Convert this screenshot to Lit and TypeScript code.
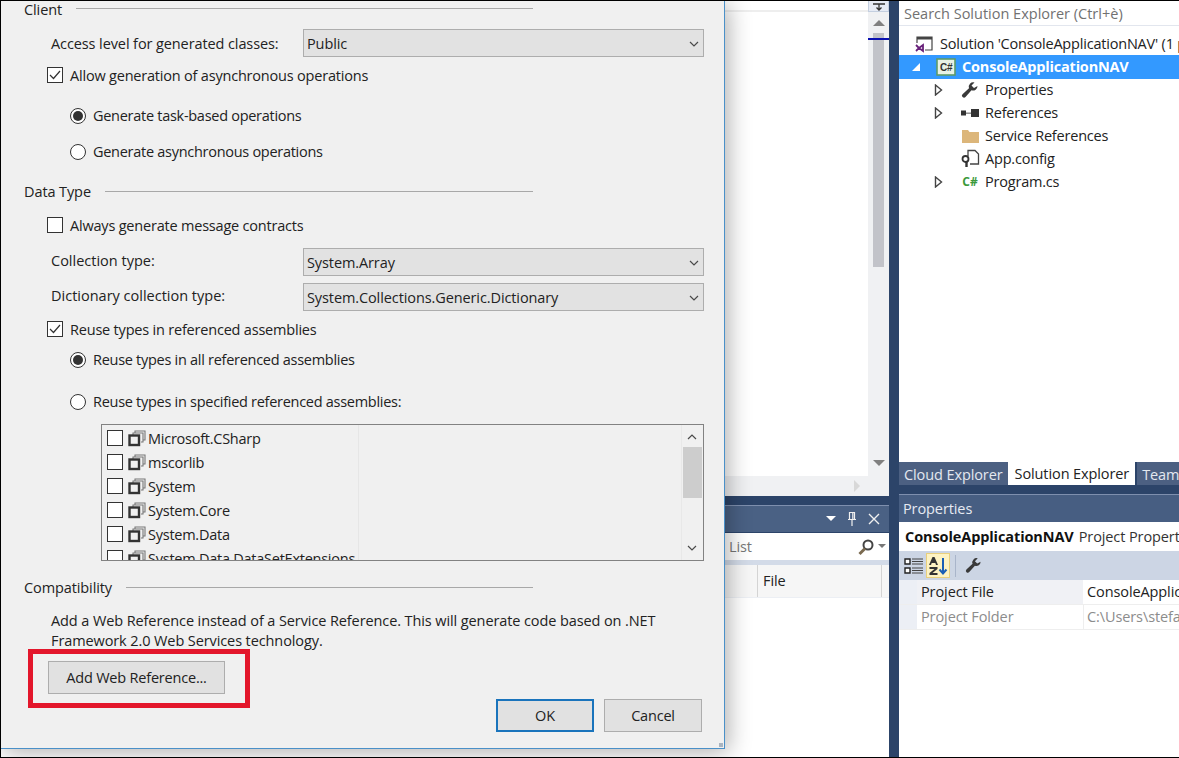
import { LitElement, html, css } from "lit";
import { customElement } from "lit/decorators.js";

const chev = (up = false) => html`<svg class="chev" width="12" height="8" viewBox="0 0 12 8"><path d=${up ? "M2 6 6 2l4 4" : "M2 2l4 4 4-4"} fill="none" stroke="#4a4a4a" stroke-width="1.2"/></svg>`;
const asm = html`<svg class="asm" width="18" height="17" viewBox="0 0 18 17"><path d="M7 3V1h10v9h-2M5 5V3h10v9h-2" fill="none" stroke="#777" stroke-width="1.1"/><rect x="1.500" y="5.500" width="9.500" height="9.500" fill="#f0f0f0" stroke="#333" stroke-width="2.400"/></svg>`;
const tri = html`<svg class="tri" width="9" height="12" viewBox="0 0 9 12"><path d="M1.500 1 7.500 6l-6 5z" fill="#fff" stroke="#444" stroke-width="1.4"/></svg>`;
const tick = html`<svg width="12" height="10" viewBox="0 0 12 10"><path d="M1 5l3.500 3.500L11 1" fill="none" stroke="#333" stroke-width="1.2"/></svg>`;
const wrench = (s: number) => html`<svg width=${s} height=${s} viewBox="0 0 18 17"><path d="M16.500 4.500a4.500 4.500 0 0 1-6 4.300L4.500 15.500a2 2 0 0 1-3-2.800l6.500-6a4.500 4.500 0 0 1 5.500-5.800L10.500 4l2.500 2.500z" fill="#3a3a3a"/></svg>`;

@customElement("app-root")
export class AppRoot extends LitElement {
  static styles = css`
    :host { display: block; width: 1179px; height: 758px; box-sizing: border-box; border: solid #000; border-width: 1px 0 1px 1px; overflow: hidden; font: 14.5px/20px "Open Sans", "Noto Sans", sans-serif; color: #222; letter-spacing: -0.1px; }
    svg { flex: none; }
    .ide { position: relative; height: 756px; display: grid; grid-template-columns: 888px 10px 280px; background: #2c4469; }
    .mid { display: flex; flex-direction: column; min-width: 0; }
    .editor { height: 495px; flex: none; background: #fff; display: flex; justify-content: flex-end; position: relative; }
    .hscroll { position: absolute; left: 724px; right: 21px; bottom: 0; height: 20px; background: #f0f1f3; display: flex; justify-content: flex-end; align-items: center; padding-right: 8px; }
    .hscroll i { width: 0; height: 0; border-left: 6px solid #d8d8d8; border-top: 6px solid transparent; border-bottom: 6px solid transparent; }
    .toprule { position: absolute; left: 724px; right: 21px; top: 9px; height: 2px; background: #eeeeee; }
    .vscroll { width: 21px; background: #f0f1f3; display: flex; flex-direction: column; align-items: center; position: relative; }
    .split { width: 100%; height: 11px; box-sizing: border-box; background: #e6ebf5; border: 1px solid #c4cfe0; border-top: 0; display: flex; justify-content: center; }
    .up { margin-top: 8px; width: 0; height: 0; border: 6px solid transparent; border-top: 0; border-bottom: 6px solid #808080; }
    .thumb { margin-top: 7px; width: 11px; height: 234px; background: #c2c3c9; }
    .down { margin-top: 193px; width: 0; height: 0; border: 6px solid transparent; border-bottom: 0; border-top: 6px solid #808080; }
    .blue { position: absolute; left: 0; right: 0; top: 37px; height: 2px; background: #0a10b0; }
    .midgap { height: 9px; flex: none; }
    .ptitle { height: 27px; flex: none; background: #4a6184; border-top: 1px solid #7e8fae; box-sizing: border-box; display: flex; justify-content: flex-end; align-items: center; gap: 10px; padding-right: 9px; }
    .psearch { height: 27px; flex: none; margin-top: 1px; background: #fff; display: flex; align-items: center; padding-left: 728px; color: #777; }
    .psearch .grow { flex: 1; }
    .psearch svg { margin-right: 3px; }
    .pgap { height: 5px; flex: none; background: #d3dbe8; }
    .phead { height: 32px; flex: none; background: #f6f6f6; display: flex; align-items: stretch; padding-left: 756px; border-bottom: 1px solid #eceff4; }
    .phead span { width: 125px; box-sizing: border-box; border: solid #d4d4d4; border-width: 0 1px; padding: 6px 0 0 5px; }
    .pbody { flex: 1; background: #fff; }

    .right { display: flex; flex-direction: column; min-width: 0; background: #fff; overflow: hidden; }
    .search { height: 25px; flex: none; color: #717171; padding: 1px 0 0 5px; box-sizing: border-box; border-bottom: 1px solid #e2e6ee; white-space: nowrap; line-height: 24px; letter-spacing: 0; }
    .tree { height: 436px; flex: none; padding-top: 6px; box-sizing: border-box; overflow: hidden; letter-spacing: -0.2px; }
    .node { height: 23px; display: flex; align-items: center; white-space: nowrap; position: relative; }
    .node.sel { height: 24px; background: #3399ff; color: #fff; font-weight: 700; margin-bottom: -1px; }
    .a { width: 60px; flex: none; padding-left: 35px; box-sizing: border-box; display: flex; }
    .ico { width: 22px; flex: none; display: flex; justify-content: center; align-items: center; margin-right: 4px; }
    .sol { padding-left: 15px; gap: 6px; }
    .prj { padding-left: 13px; }
    .prj .glyph { width: 0; height: 0; border-left: 8px solid transparent; border-bottom: 8px solid #fff; margin-right: 16px; }
    .prj svg { margin-right: 6px; }
    .cs { color: #3c9a3c; font-weight: 700; font-size: 12px; letter-spacing: 0; }
    .tabs { height: 23px; flex: none; background: #2c4469; display: flex; gap: 2px; }
    .tab { background: #4c6082; color: #e4e8f0; padding: 0 5px; line-height: 25px; white-space: nowrap; }
    .tab.cur { background: #fff; color: #222; margin-left: -2px; padding: 0 6px 0 7px; line-height: 23px; }
    .tabgap { height: 9px; flex: none; background: #2c4469; }
    .ph { height: 28px; flex: none; background: #475e82; border-top: 1px solid #7e8fae; box-sizing: border-box; color: #e6eaf2; padding-left: 4px; line-height: 27px; }
    .subj { height: 29px; flex: none; padding-left: 6px; line-height: 29px; white-space: nowrap; color: #333; }
    .subj b { color: #111; margin-right: 5px; }
    .tb { height: 29px; flex: none; background: #ccd5e4; display: flex; align-items: center; padding-left: 5px; gap: 2px; }
    .tbact { width: 24px; height: 25px; box-sizing: border-box; background: #fdf2c2; border: 1px solid #e8cf7c; display: flex; align-items: center; justify-content: center; }
    .tbsep { width: 1px; height: 22px; background: #a9b5ca; margin: 0 7px 0 3px; }
    .prow { height: 24px; display: grid; grid-template-columns: 18px 166px 1fr; border-bottom: 1px solid #eeeeee; white-space: nowrap; line-height: 24px; overflow: hidden; }
    .prow > :nth-child(1) { background: #eceff5; }
    .prow > :nth-child(2) { background: #f0f1f5; padding-left: 4px; }
    .prow > :nth-child(3) { padding-left: 4px; }
    .prow.dim { color: #8c8c8c; }
    .prow.dim > :nth-child(2) { background: #fff; }
    .prow.dim > :nth-child(3) { border-left: 1px solid #eeeeee; padding-left: 3px; }

    .dialog { position: absolute; left: 0; top: 0; width: 724px; height: 748px; box-sizing: border-box; background: #f0f0f0; border: solid #4a90c8; border-width: 0 1px 1px 0; box-shadow: 3px 3px 22px rgba(0,0,0,.32); display: flex; flex-direction: column; white-space: nowrap; }
    .group { height: 20px; box-sizing: border-box; padding-top: 2px; flex: none; display: flex; align-items: center; margin-left: 23px; width: 509px; gap: 14px; }
    .group::after { content: ""; flex: 1; height: 1px; background: #a8a8a8; margin-bottom: 2px; }
    .first { height: 15px; }
    .field { height: 28px; flex: none; display: flex; align-items: center; margin-left: 50px; }
    .field label { width: 252px; flex: none; }
    .field label.hi { margin-top: -3px; letter-spacing: 0; }
    .field label.mid-l { margin-top: 1px; }
    .combo { width: 401px; height: 28px; box-sizing: border-box; background: #e2e2e2; border: 1px solid #adadad; display: flex; align-items: center; justify-content: space-between; padding: 1px 3px 0 3px; }
    .check, .radio { height: 20px; flex: none; display: flex; align-items: center; gap: 7px; }
    .check { margin-left: 46px; letter-spacing: -0.2px; }
    .check span:last-child { padding-top: 2px; }
    .radio { margin-left: 69px; letter-spacing: -0.28px; }
    .box { width: 16px; height: 16px; box-sizing: border-box; border: 1px solid #333; background: #fff; display: flex; align-items: center; justify-content: center; flex: none; }
    .dot { width: 16px; height: 16px; box-sizing: border-box; border: 1px solid #333; border-radius: 50%; background: #fff; display: flex; align-items: center; justify-content: center; flex: none; }
    .dot.on::after { content: ""; width: 10px; height: 10px; border-radius: 50%; background: #333; }
    .list { height: 137px; flex: none; width: 603px; box-sizing: border-box; margin-left: 100px; border: 1px solid #828282; display: flex; overflow: hidden; }
    .items { width: 257px; flex: none; border-right: 1px solid #e6e6e6; padding: 1px 0 0 5px; box-sizing: border-box; overflow: hidden; letter-spacing: -0.25px; }
    .item { height: 24px; display: flex; align-items: center; gap: 5px; }
    .item span:last-child { margin-left: -3px; padding-top: 2px; }
    .lfill { flex: 1; }
    .lscroll { width: 22px; flex: none; background: #f0f0f0; border-left: 1px solid #e8e8e8; box-sizing: border-box; display: flex; flex-direction: column; align-items: center; padding: 8px 1px 0 0; }
    .lthumb { width: 19px; height: 51px; background: #cdcdcd; margin-top: 6px; }
    .lscroll .chev:last-child { margin-top: 46px; }
    .desc { height: 40px; flex: none; margin-left: 50px; padding-top: 1px; }
    .btn { height: 33px; box-sizing: border-box; background: #e1e1e1; border: 1px solid #adadad; display: flex; align-items: center; justify-content: center; flex: none; letter-spacing: -0.2px; }
    .add { width: 177px; margin-left: 47px; }
    .foot { display: flex; justify-content: flex-end; gap: 10px; padding-right: 22px; }
    .ok, .cancel { width: 98px; }
    .ok { border: 2px solid #1a74bc; }
    .m5 { margin-top: 5px; } .m7 { margin-top: 7px; } .m8 { margin-top: 8px; } .m10 { margin-top: 10px; } .m11 { margin-top: 11px; } .m12 { margin-top: 12px; } .m13 { margin-top: 13px; } .m14 { margin-top: 14px; } .m16 { margin-top: 16px; } .m19 { margin-top: 19px; } .m21 { margin-top: 21px; } .m22 { margin-top: 22px; }
    .red { position: absolute; left: 27px; top: 648px; width: 222px; height: 59px; box-sizing: border-box; border: 5px solid #e3162b; }
    .grip { position: absolute; right: 1px; bottom: 1px; width: 4px; height: 4px; background: #a9b4c0; }
  `;

  private item(t: string) {
    return html`<div class="item"><span class="box"></span>${asm}<span>${t}</span></div>`;
  }

  render() {
    return html`<div class="ide">
      <div class="mid">
        <div class="editor">
          <div class="toprule"></div>
          <div class="hscroll"><i></i></div>
          <div class="vscroll">
            <div class="split"><svg width="12" height="10" viewBox="0 0 12 10"><path d="M0 3h12M6 3v6M3.500 6.500 6 9l2.500-2.500" stroke="#333" stroke-width="1.3" fill="none"/></svg></div>
            <div class="up"></div><div class="thumb"></div><div class="down"></div>
            <div class="blue"></div>
          </div>
        </div>
        <div class="midgap"></div>
        <div class="ptitle">
          <svg width="10" height="6" viewBox="0 0 10 6"><path d="M0 0h10L5 5z" fill="#fff"/></svg>
          <svg width="12" height="16" viewBox="0 0 12 16"><path d="M3.500 1.500h5v7h-5zM2 8.500h8M6 8.500V15M6.800 2v6" fill="none" stroke="#f0f0f0" stroke-width="1.2"/></svg>
          <svg width="12" height="12" viewBox="0 0 12 12"><path d="M1 1l10 10M11 1 1 11" stroke="#f0f0f0" stroke-width="1.4"/></svg>
        </div>
        <div class="psearch"><span>List</span><span class="grow"></span>
          <svg width="18" height="18" viewBox="0 0 18 18"><circle cx="11" cy="7" r="4.500" fill="none" stroke="#444" stroke-width="2"/><path d="M8 10.500 2.500 16" stroke="#7a6a50" stroke-width="3"/></svg>
          <svg width="8" height="5" viewBox="0 0 8 5"><path d="M0 0h8L4 4z" fill="#777"/></svg>
        </div>
        <div class="pgap"></div>
        <div class="phead"><span>File</span></div>
        <div class="pbody"></div>
      </div>
      <div></div>
      <div class="right">
        <div class="search">Search Solution Explorer (Ctrl+è)</div>
        <div class="tree">
          <div class="node sol">
            <svg width="20" height="18" viewBox="0 0 20 18"><path d="M3 8V2h15v13h-7" fill="none" stroke="#444" stroke-width="1.2"/><path d="M3 2h15v2.500H3z" fill="#444"/><path d="M2 10l3 3-3 3M9 10 5 13l4 3z" fill="none" stroke="#68217a" stroke-width="1.8"/></svg>
            <span>Solution 'ConsoleApplicationNAV' (1 project)</span>
          </div>
          <div class="node sel prj">
            <span class="glyph"></span>
            <svg width="20" height="18" viewBox="0 0 20 18"><rect x="1" y="1" width="18" height="16" fill="#e8f2e6" stroke="#5d9a6a" stroke-width="1.6"/><text x="4" y="13" font-size="10" font-weight="700" fill="#333" font-family="Liberation Sans">C#</text></svg>
            <span>ConsoleApplicationNAV</span>
          </div>
          <div class="node"><span class="a">${tri}</span><span class="ico">${wrench(18)}</span><span>Properties</span></div>
          <div class="node"><span class="a">${tri}</span><span class="ico"><svg width="18" height="10" viewBox="0 0 18 10"><rect x="0" y="2.500" width="5" height="5" fill="#333"/><rect x="5" y="4.500" width="5" height="1.400" fill="#888"/><rect x="10" y="1" width="8" height="8" fill="#333"/></svg></span><span>References</span></div>
          <div class="node"><span class="a"></span><span class="ico"><svg width="17" height="15" viewBox="0 0 17 15"><path d="M0 2h6l1.500 2H17v11H0z" fill="#dcb67a"/></svg></span><span>Service References</span></div>
          <div class="node"><span class="a"></span><span class="ico"><svg width="19" height="19" viewBox="0 0 19 19"><path d="M7 7V1.500h7l3.500 3.500v10H9" fill="none" stroke="#444" stroke-width="1.3"/><circle cx="4.500" cy="10" r="3" fill="none" stroke="#333" stroke-width="1.800"/><path d="M5.500 12.500V18" stroke="#333" stroke-width="2.400"/></svg></span><span>App.config</span></div>
          <div class="node"><span class="a">${tri}</span><span class="ico"><span class="cs">C#</span></span><span>Program.cs</span></div>
        </div>
        <div class="tabs"><div class="tab">Cloud Explorer</div><div class="tab cur">Solution Explorer</div><div class="tab">Team Explorer</div></div>
        <div class="tabgap"></div>
        <div class="ph">Properties</div>
        <div class="subj"><b>ConsoleApplicationNAV</b>Project Properties</div>
        <div class="tb">
          <svg width="20" height="20" viewBox="0 0 20 20"><path d="M1 3h5v5H1zM1 12h5v5H1z" fill="#fff" stroke="#222" stroke-width="1.400"/><path d="M8 3h11M8 5.500h11M8 8h11M8 12h11M8 14.500h11M8 17h11" stroke="#444" stroke-width="1"/></svg>
          <div class="tbact"><svg width="20" height="20" viewBox="0 0 20 20"><path d="M1 9 4.500 1h2L10 9H8L7.300 7H3.700L3 9z" fill="#333"/><path d="M1.500 11h8v2L4.500 17h5v2h-8v-2l5-4h-5z" fill="#333"/><path d="M15 2v15M11.500 13.500 15 17.500l3.500-4" fill="none" stroke="#1b5fb5" stroke-width="2"/></svg></div>
          <div class="tbsep"></div>
          ${wrench(17)}
        </div>
        <div class="prow"><span></span><span>Project File</span><span>ConsoleApplicationNAV.csproj</span></div>
        <div class="prow dim"><span></span><span>Project Folder</span><span>C:\\Users\\stefano\\Documents</span></div>
      </div>

      <div class="dialog">
        <div class="group first">Client</div>
        <div class="field m13"><label class="mid-l">Access level for generated classes:</label><div class="combo"><span>Public</span>${chev()}</div></div>
        <div class="check m8"><span class="box">${tick}</span><span>Allow generation of asynchronous operations</span></div>
        <div class="radio m21"><span class="dot on"></span><span>Generate task-based operations</span></div>
        <div class="radio m16"><span class="dot"></span><span>Generate asynchronous operations</span></div>
        <div class="group m19">Data Type</div>
        <div class="check m14"><span class="box"></span><span>Always generate message contracts</span></div>
        <div class="field m13"><label class="hi">Collection type:</label><div class="combo"><span>System.Array</span>${chev()}</div></div>
        <div class="field m7"><label class="hi">Dictionary collection type:</label><div class="combo"><span>System.Collections.Generic.Dictionary</span>${chev()}</div></div>
        <div class="check m8"><span class="box">${tick}</span><span>Reuse types in referenced assemblies</span></div>
        <div class="radio m11"><span class="dot on"></span><span>Reuse types in all referenced assemblies</span></div>
        <div class="radio m22"><span class="dot"></span><span>Reuse types in specified referenced assemblies:</span></div>
        <div class="list m12">
          <div class="items">
            ${["Microsoft.CSharp", "mscorlib", "System", "System.Core", "System.Data", "System.Data.DataSetExtensions"].map((t) => this.item(t))}
          </div>
          <div class="lfill"></div>
          <div class="lscroll">${chev(true)}<div class="lthumb"></div>${chev()}</div>
        </div>
        <div class="group m16">Compatibility</div>
        <div class="desc m13">Add a Web Reference instead of a Service Reference. This will generate code based on .NET<br />Framework 2.0 Web Services technology.</div>
        <div class="btn add m10">Add Web Reference...</div>
        <div class="foot m5"><div class="btn ok">OK</div><div class="btn cancel">Cancel</div></div>
        <div class="red"></div>
        <div class="grip"></div>
      </div>
    </div>`;
  }
}
